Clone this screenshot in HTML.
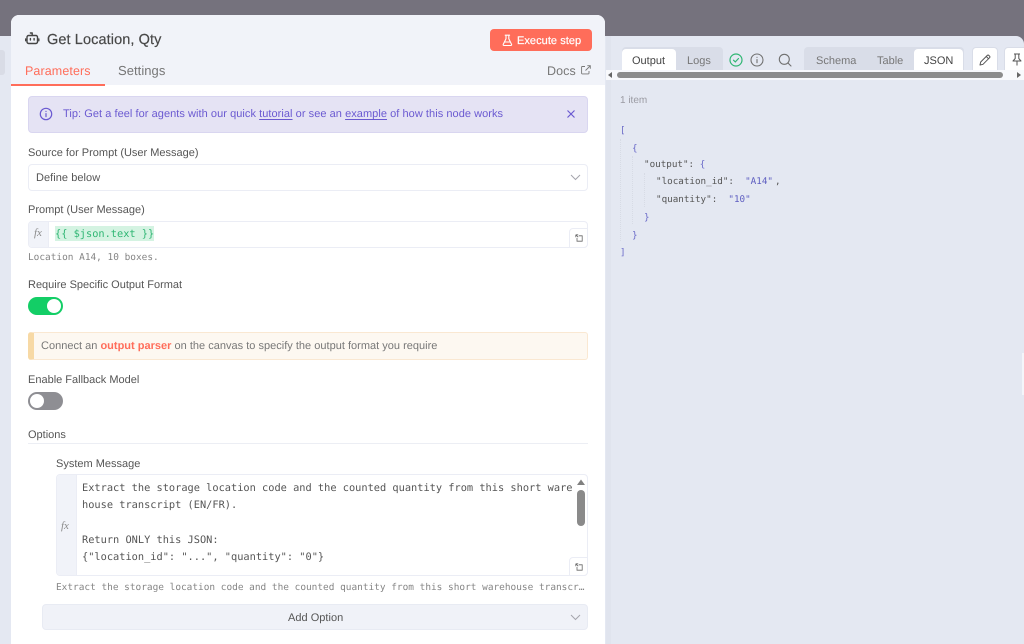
<!DOCTYPE html>
<html><head><meta charset="utf-8">
<style>
html,body{margin:0;padding:0;width:1024px;height:644px;overflow:hidden;background:#75727d}
body{position:relative;font-family:"Liberation Sans",sans-serif;color:#555;text-rendering:geometricPrecision}
.a{position:absolute;white-space:nowrap}
.l{font-size:11px;line-height:14px;color:#555}
.t{font-size:11px;line-height:14px;color:#777}
.m{font-family:"DejaVu Sans Mono",monospace}
.b{color:#6a6ac8}
svg{position:absolute;overflow:visible;fill:none}
u{text-underline-offset:2px}
</style></head><body>
<!-- backgrounds -->
<div class="a" style="left:0;top:36px;width:11px;height:608px;background:#e4e8f2"></div>
<div class="a" style="left:0;top:50px;width:5px;height:25px;background:#d9dce6;border-radius:0 3px 3px 0"></div>
<div class="a" style="left:600px;top:36px;width:424px;height:608px;background:#e4e8f2;border-radius:0 8px 0 0"></div>
<div class="a" style="left:1022px;top:353px;width:2px;height:42px;background:#f4f5fa"></div>

<!-- left panel -->
<div class="a" style="left:11px;top:15px;width:594px;height:629px;background:#fff;border-radius:8px 8px 0 0;overflow:hidden">
  <div class="a" style="left:0;top:0;width:594px;height:70px;background:#f1f3f9"></div>
  <div class="a" style="left:0;top:69px;width:94px;height:2px;background:#ff6d5a"></div>
</div>

<!-- header -->
<svg style="left:25px;top:31px" width="15" height="15" viewBox="0 0 15 15" stroke="#444" stroke-width="1.4" stroke-linecap="round" stroke-linejoin="round"><rect x="2" y="4.5" width="10.5" height="8" rx="1.6"/><path d="M7.2 4.5V2H5.4M.7 8v1.8M13.8 8v1.8M5.4 7.600v1.400M9.100 7.600v1.400"/></svg>
<div class="a" style="left:47px;top:32px;font-size:14.500px;line-height:16px;color:#484848;-webkit-text-stroke:.2px #484848;letter-spacing:.1px">Get Location, Qty</div>
<div class="a" style="left:490px;top:29px;width:102px;height:22px;background:#ff6d5a;border-radius:4px"></div>
<svg style="left:501px;top:34px" width="13" height="13" viewBox="0 0 13 13" stroke="#fff" stroke-width="1.1" stroke-linejoin="round" stroke-linecap="round"><path d="M4.200 1.200h4.400M5 1.200v3.600L2.300 10.200q-.5 1.300.9 1.300h6.400q1.400 0 .9-1.300L7.800 4.800V1.200M3.600 8h5.600"/></svg>
<div class="a" style="left:517px;top:34px;font-size:11px;line-height:14px;color:#fff;-webkit-text-stroke:.2px #fff;letter-spacing:.05px">Execute step</div>
<div class="a" style="left:25px;top:63px;font-size:12.500px;line-height:16px;color:#ff6d5a;letter-spacing:.1px">Parameters</div>
<div class="a" style="left:118px;top:63px;font-size:13px;line-height:16px;color:#777;letter-spacing:.05px">Settings</div>
<div class="a" style="left:547px;top:63px;font-size:12.500px;line-height:16px;color:#777;letter-spacing:.1px">Docs</div>
<svg style="left:581px;top:65px" width="10" height="10" viewBox="0 0 10 10" stroke="#777" stroke-width=".9"><path d="M4 1.500H1.200a.6.6 0 0 0-.6.6v6.200a.6.6 0 0 0 .6.6h6.200a.6.6 0 0 0 .6-.6V6M4.500 5.500 9.300 .8M6.300 .7h3v3"/></svg>

<!-- tip -->
<div class="a" style="left:28px;top:96px;width:560px;height:37px;background:#e5e3f4;border:1px solid #d9d6f0;border-radius:4px;box-sizing:border-box"></div>
<svg style="left:39px;top:107px" width="14" height="14" viewBox="0 0 14 14" stroke="#6a59d1" stroke-width="1.2" stroke-linecap="round"><circle cx="7" cy="7" r="5.700"/><path d="M7 6.600v3M7 4.400v.1"/></svg>
<div class="a" style="left:63px;top:107px;font-size:11px;line-height:14px;color:#6a59d1;letter-spacing:.05px">Tip: Get a feel for agents with our quick <u>tutorial</u> or see an <u>example</u> of how this node works</div>
<svg style="left:567px;top:110px" width="8" height="8" viewBox="0 0 8 8" stroke="#6a59d1" stroke-width="1.200"><path d="M.5.500l7 7M7.500.500l-7 7"/></svg>

<!-- source -->
<div class="a l" style="left:28px;top:146px">Source for Prompt (User Message)</div>
<div class="a" style="left:28px;top:164px;width:560px;height:27px;background:#fff;border:1px solid #ebedf5;border-radius:4px;box-sizing:border-box"></div>
<div class="a l" style="left:36px;top:171px;letter-spacing:.05px">Define below</div>
<svg style="left:570px;top:174px" width="11" height="7" viewBox="0 0 11 7" stroke="#a5a5ad" stroke-width="1"><path d="M1 1l4.500 4.500L10 1"/></svg>

<!-- prompt -->
<div class="a l" style="left:28px;top:203px">Prompt (User Message)</div>
<div class="a" style="left:28px;top:221px;width:560px;height:27px;background:#fff;border:1px solid #ebedf5;border-radius:4px;box-sizing:border-box;overflow:hidden"><div style="width:19px;height:25px;background:#f1f3f9;border-right:1px solid #ebedf5"></div></div>
<div class="a" style="left:34px;top:226px;font-family:'Liberation Serif',serif;font-style:italic;font-size:11px;line-height:14px;color:#8a8a8a">fx</div>
<div class="a m" style="left:55px;top:226px;height:15px;line-height:16px;font-size:10.300px;color:#2fb673;background:#d4f3e2">{{ $json.text }}</div>
<div class="a" style="left:569px;top:228px;width:19px;height:20px;background:#fff;border:1px solid #ebedf5;border-radius:4px 0 4px 0;box-sizing:border-box"></div>
<svg style="left:575px;top:234px" width="8" height="8" viewBox="0 0 8 8" stroke="#666" stroke-width=".8"><path d="M.8 .8h2.400M.8 .8v2.400M.8 .8l2.400 2.400M3.800 1.800h3.400v5.400H2V4"/></svg>
<div class="a m" style="left:28px;top:251px;font-size:9.450px;line-height:14px;color:#858585">Location A14, 10 boxes.</div>

<!-- require -->
<div class="a l" style="left:28px;top:278px">Require Specific Output Format</div>
<div class="a" style="left:28px;top:297px;width:35px;height:18px;background:#13ce66;border-radius:9px"></div>
<div class="a" style="left:47px;top:299px;width:14px;height:14px;background:#fff;border-radius:50%"></div>

<!-- notice -->
<div class="a" style="left:28px;top:332px;width:560px;height:28px;background:#fdf8f1;border:1px solid #fae8d2;border-left:6px solid #f7d9a5;border-radius:3px;box-sizing:border-box"></div>
<div class="a" style="left:41px;top:339px;font-size:11px;line-height:14px;color:#777;letter-spacing:.01px">Connect an <b style="color:#ff6d5a">output parser</b> on the canvas to specify the output format you require</div>

<!-- fallback -->
<div class="a l" style="left:28px;top:373px">Enable Fallback Model</div>
<div class="a" style="left:28px;top:392px;width:35px;height:18px;background:#8e8e93;border-radius:9px"></div>
<div class="a" style="left:30px;top:394px;width:14px;height:14px;background:#fff;border-radius:50%"></div>

<!-- options -->
<div class="a l" style="left:28px;top:428px">Options</div>
<div class="a" style="left:28px;top:443px;width:560px;height:1px;background:#eceef4"></div>
<div class="a l" style="left:56px;top:457px">System Message</div>
<div class="a" style="left:56px;top:474px;width:532px;height:102px;background:#fff;border:1px solid #ebedf5;border-radius:4px;box-sizing:border-box;overflow:hidden"><div style="width:19px;height:100px;background:#f1f3f9;border-right:1px solid #ebedf5"></div></div>
<div class="a" style="left:61px;top:519px;font-family:'Liberation Serif',serif;font-style:italic;font-size:11px;line-height:14px;color:#8a8a8a">fx</div>
<div class="a m" style="left:82px;top:480px;font-size:10.320px;line-height:17.300px;color:#555">Extract the storage location code and the counted quantity from this short ware<br>house transcript (EN/FR).<br><br>Return ONLY this JSON:<br>{"location_id": "...", "quantity": "0"}</div>
<svg style="left:576px;top:478px" width="10" height="8" viewBox="0 0 10 8"><path d="M1 7L5 1.500 9 7z" fill="#808080"/></svg>
<div class="a" style="left:577px;top:490px;width:8px;height:36px;background:#8a8a8a;border-radius:4px"></div>
<div class="a" style="left:569px;top:557px;width:19px;height:19px;background:#fff;border:1px solid #ebedf5;border-radius:4px 0 4px 0;box-sizing:border-box"></div>
<svg style="left:575px;top:563px" width="8" height="8" viewBox="0 0 8 8" stroke="#666" stroke-width=".8"><path d="M.8 .8h2.400M.8 .8v2.400M.8 .8l2.400 2.400M3.800 1.800h3.400v5.400H2V4"/></svg>
<div class="a m" style="left:56px;top:581px;font-size:9.450px;line-height:14px;color:#858585">Extract the storage location code and the counted quantity from this short warehouse transcr…</div>
<div class="a" style="left:42px;top:604px;width:546px;height:26px;background:#f0f2f8;border:1px solid #e8ebf3;border-radius:4px;box-sizing:border-box"></div>
<div class="a l" style="left:288px;top:611px;letter-spacing:.02px">Add Option</div>
<svg style="left:570px;top:614px" width="11" height="7" viewBox="0 0 11 7" stroke="#a5a5ad" stroke-width="1"><path d="M1 1l4.500 4.500L10 1"/></svg>

<!-- right panel -->
<div class="a" style="left:606px;top:36px;width:5px;height:608px;background:#e0e4ee"></div>
<div class="a" style="left:622px;top:47px;width:101px;height:24px;background:#d9dde8;border-radius:4px 4px 0 0"></div>
<div class="a" style="left:622px;top:49px;width:54px;height:22px;background:#fff;border-radius:4px 4px 0 0"></div>
<div class="a t" style="left:632px;top:54px;color:#444">Output</div>
<div class="a t" style="left:687px;top:54px">Logs</div>
<svg style="left:729px;top:53px" width="14" height="14" viewBox="0 0 14 14" stroke="#2fb673" stroke-width="1.200" stroke-linecap="round"><circle cx="7" cy="7" r="6"/><path d="M4.500 7.200l1.800 1.700 3.200-3.400"/></svg>
<svg style="left:750px;top:53px" width="14" height="14" viewBox="0 0 14 14" stroke="#707070" stroke-width="1.100" stroke-linecap="round"><circle cx="7" cy="7" r="6"/><path d="M7 6.500v3.200M7 4.300v.1"/></svg>
<svg style="left:778px;top:53px" width="14" height="14" viewBox="0 0 14 14" stroke="#707070" stroke-width="1.100" stroke-linecap="round"><circle cx="6.300" cy="6.300" r="5"/><path d="M10 10l3 3"/></svg>
<div class="a" style="left:804px;top:47px;width:160px;height:24px;background:#d9dde8;border-radius:4px 4px 0 0"></div>
<div class="a" style="left:914px;top:49px;width:49px;height:22px;background:#fff;border-radius:4px 4px 0 0"></div>
<div class="a t" style="left:816px;top:54px">Schema</div>
<div class="a t" style="left:877px;top:54px">Table</div>
<div class="a t" style="left:924px;top:54px;color:#444">JSON</div>
<div class="a" style="left:972px;top:47px;width:26px;height:24px;background:#fff;border:1px solid #d9dde8;border-bottom:0;border-radius:4px 4px 0 0;box-sizing:border-box"></div>
<svg style="left:979px;top:54px" width="12" height="12" viewBox="0 0 12 12" stroke="#555" stroke-width="1" stroke-linejoin="round"><path d="M1 11l.7-3L8.300 1.400q.8-.7 1.500 0l.8.8q.7.700 0 1.500L4 10.300zM7.300 2.500l2.200 2.200"/></svg>
<div class="a" style="left:1004px;top:47px;width:26px;height:24px;background:#fff;border:1px solid #d9dde8;border-bottom:0;border-radius:4px 4px 0 0;box-sizing:border-box"></div>
<svg style="left:1011px;top:53px" width="12" height="13" viewBox="0 0 12 13" stroke="#555" stroke-width="1" stroke-linejoin="round"><path d="M3 1h6M4.200 1v4.500L2 8h8L7.800 5.500V1M6 8v4.500"/></svg>
<div class="a" style="left:606px;top:70px;width:418px;height:10px;background:#f8f9fc"></div>
<svg style="left:607px;top:72px" width="6" height="6" viewBox="0 0 6 6"><path d="M5 0v6L1 3z" fill="#666"/></svg>
<div class="a" style="left:617px;top:72px;width:386px;height:6px;background:#8c8c8c;border-radius:3px"></div>
<svg style="left:1016px;top:72px" width="6" height="6" viewBox="0 0 6 6"><path d="M1 0v6l4-3z" fill="#666"/></svg>

<div class="a" style="left:620px;top:94px;font-size:10px;line-height:14px;color:#9a9aa2">1 item</div>

<!-- json -->
<div class="a m" style="left:620px;top:124px;font-size:9.250px;line-height:14px;color:#555"><span class="b">[</span></div>
<div class="a m" style="left:632px;top:142px;font-size:9.250px;line-height:14px"><span class="b">{</span></div>
<div class="a m" style="left:644px;top:158px;font-size:9.250px;line-height:14px;color:#555">"output": <span class="b">{</span></div>
<div class="a m" style="left:656px;top:175px;font-size:9.250px;line-height:14px;color:#555">"location_id":&nbsp; <span style="color:#5d5dc0">"A14"</span><span style="margin-left:2px">,</span></div>
<div class="a m" style="left:656px;top:193px;font-size:9.250px;line-height:14px;color:#555">"quantity":&nbsp; <span style="color:#5d5dc0">"10"</span></div>
<div class="a m" style="left:644px;top:211px;font-size:9.250px;line-height:14px"><span class="b">}</span></div>
<div class="a m" style="left:632px;top:229px;font-size:9.250px;line-height:14px"><span class="b">}</span></div>
<div class="a m" style="left:620px;top:246px;font-size:9.250px;line-height:14px"><span class="b">]</span></div>
<div class="a" style="left:620px;top:139px;height:102px;width:0;border-left:1px dotted #d7dbe5"></div>
<div class="a" style="left:632px;top:156px;height:68px;width:0;border-left:1px dotted #d7dbe5"></div>
<div class="a" style="left:644px;top:173px;height:34px;width:0;border-left:1px dotted #d7dbe5"></div>
</body></html>
